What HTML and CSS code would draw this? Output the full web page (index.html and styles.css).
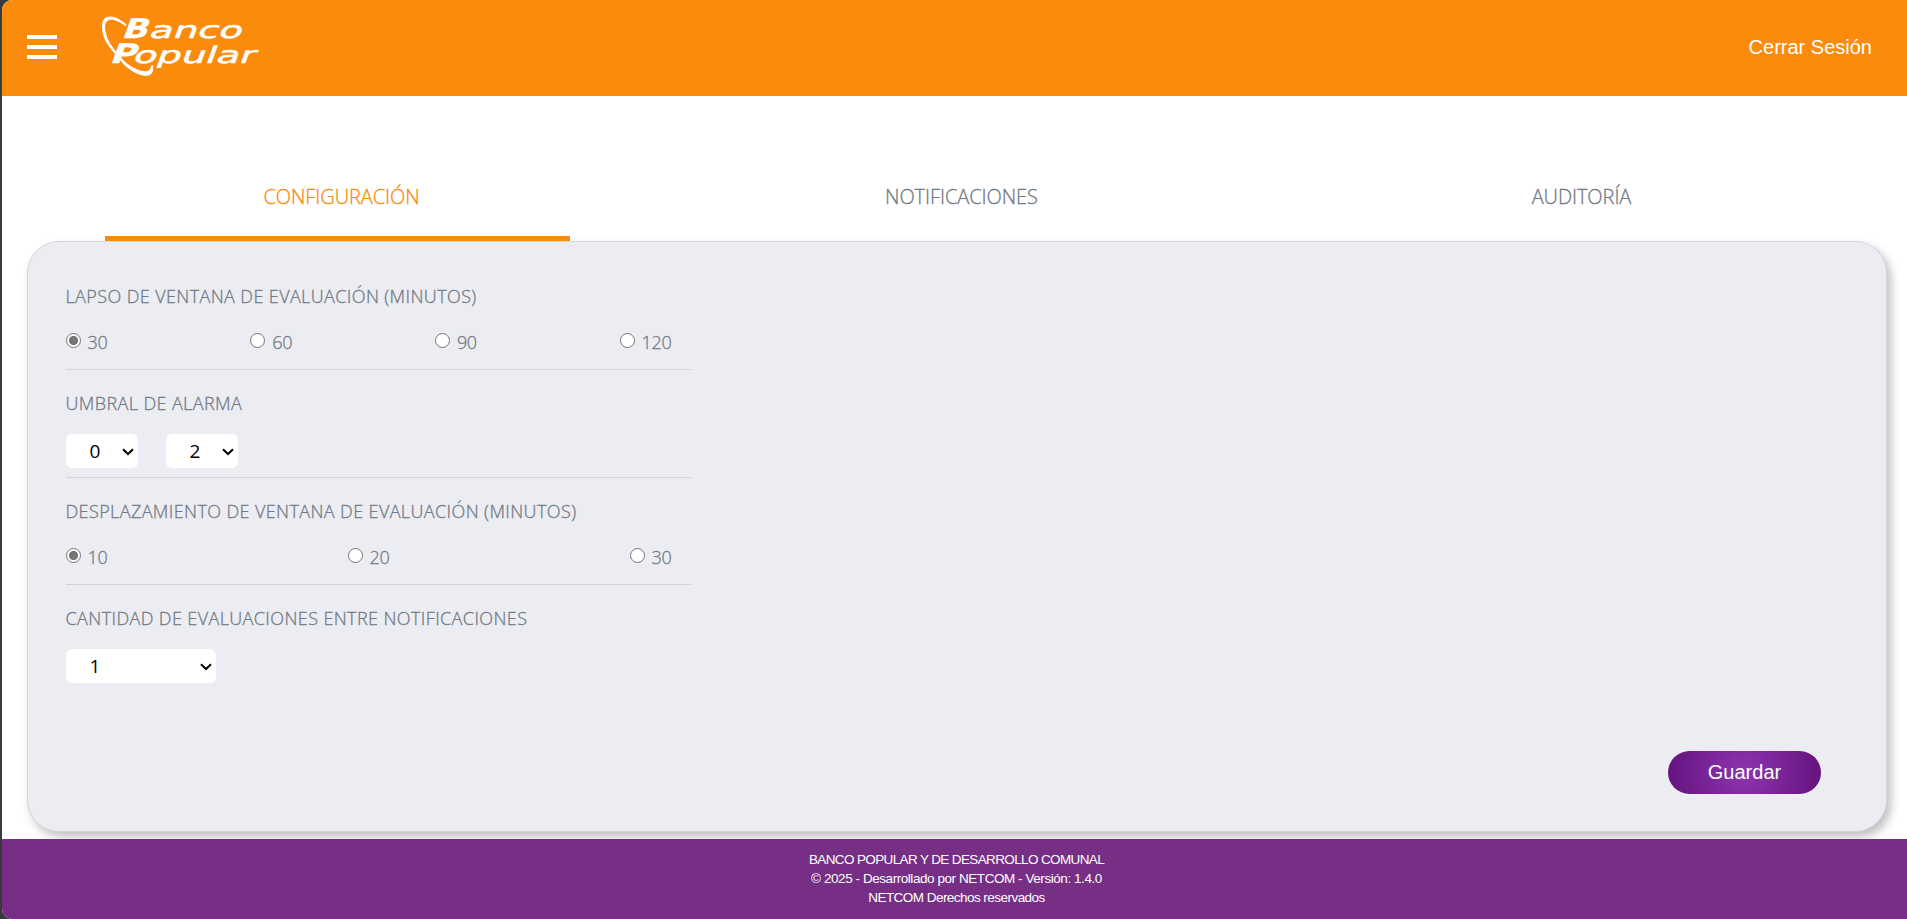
FILE: index.html
```
<!DOCTYPE html>
<html lang="es">
<head>
<meta charset="utf-8">
<title>Banco Popular</title>
<link rel="stylesheet" href="styles.css">
</head>
<body>
<div class="page">
  <header class="header">
    <button class="menu" aria-label="Menú"><span></span><span></span><span></span></button>
    <svg class="logo" viewBox="0 0 160 64" width="160" height="64" role="img" aria-label="Banco Popular">
      <path d="M0 11 C0 -4 14 -1 25 9 L23 10 C14 3 3 0 3 12 C4 23 10 31 17 39 C24 48 33 54 41 55 C46 56 49 54 49 50 L51 49 C52 56 50 60 43 60 C34 59 22 51 15 40 C6 31 0 21 0 11Z" class="ring"/>
      <g transform="skewX(-20)">
        <text x="27" y="22" class="cap" textLength="26" lengthAdjust="spacingAndGlyphs">B</text>
        <text x="54" y="22" class="word" textLength="93" lengthAdjust="spacingAndGlyphs">anco</text>
        <text x="24" y="47" class="cap" textLength="26" lengthAdjust="spacingAndGlyphs">P</text>
        <text x="47" y="47" class="word" textLength="122" lengthAdjust="spacingAndGlyphs">opular</text>
      </g>
    </svg>
    <a class="logout">Cerrar Sesión</a>
  </header>
  <main class="main">
    <nav class="tabs">
      <a class="tab active">CONFIGURACIÓN</a>
      <a class="tab">NOTIFICACIONES</a>
      <a class="tab">AUDITORÍA</a>
    </nav>
    <section class="card">
      <form class="form">
        <div class="row">
          <h2>LAPSO DE VENTANA DE EVALUACIÓN (MINUTOS)</h2>
          <div class="radios">
            <label><input type="radio" name="lapso" checked>30</label>
            <label><input type="radio" name="lapso">60</label>
            <label><input type="radio" name="lapso">90</label>
            <label><input type="radio" name="lapso">120</label>
          </div>
        </div>
        <div class="row">
          <h2>UMBRAL DE ALARMA</h2>
          <div class="selects">
            <div class="select"><select><option>0</option></select><svg viewBox="0 0 12 8"><path d="M1 1.2 L6 6 L11 1.2"/></svg></div>
            <div class="select"><select><option>2</option></select><svg viewBox="0 0 12 8"><path d="M1 1.2 L6 6 L11 1.2"/></svg></div>
          </div>
        </div>
        <div class="row">
          <h2>DESPLAZAMIENTO DE VENTANA DE EVALUACIÓN (MINUTOS)</h2>
          <div class="radios">
            <label><input type="radio" name="desp" checked>10</label>
            <label><input type="radio" name="desp">20</label>
            <label><input type="radio" name="desp">30</label>
          </div>
        </div>
        <div class="row">
          <h2>CANTIDAD DE EVALUACIONES ENTRE NOTIFICACIONES</h2>
          <div class="selects">
            <div class="select wide"><select><option>1</option></select><svg viewBox="0 0 12 8"><path d="M1 1.2 L6 6 L11 1.2"/></svg></div>
          </div>
        </div>
      </form>
      <button class="save">Guardar</button>
    </section>
  </main>
  <footer class="footer">
    <div class="org">BANCO POPULAR Y DE DESARROLLO COMUNAL</div>
    <div class="version">© 2025 - Desarrollado por NETCOM - Versión: 1.4.0</div>
    <div class="rights">NETCOM Derechos reservados</div>
  </footer>
</div>
</body>
</html>
```
FILE: styles.css
```
* { box-sizing: border-box; }
body {
  margin: 0;
  padding-left: 2px;
  height: 919px;
  overflow: hidden;
  background: #3a393b;
  font-family: "Open Sans", "Noto Sans", sans-serif;
}
.page {
  height: 919px;
  display: flex;
  flex-direction: column;
  background: #fff;
  border-radius: 10px 0 0 10px;
  overflow: hidden;
}
.header {
  height: 96px;
  flex: none;
  display: flex;
  align-items: center;
  padding: 0 35px 0 25px;
  background: #fa8b0d;
}
.menu {
  width: 30px;
  height: 24px;
  margin-top: -2px;
  padding: 0;
  border: 0;
  background: none;
  display: flex;
  flex-direction: column;
  justify-content: space-between;
}
.menu span { display: block; width: 30px; height: 4px; background: #fff; }
.logo { margin-left: 45px; overflow: visible; }
.ring { fill: #fff; }
.cap, .word { fill: #fff; stroke: #fff; font-family: "DejaVu Sans", sans-serif; }
.cap { font-size: 27px; font-weight: 700; stroke-width: .3px; }
.word { font-size: 23px; stroke-width: .5px; }
.logout {
  margin-left: auto;
  margin-top: -2px;
  color: #fff;
  font: 20px "Liberation Sans", Arial, sans-serif;
}
.main { flex: 1; padding: 64px 20px 0 25px; }
.tabs { display: grid; grid-template-columns: repeat(3, 1fr); height: 81px; }
.tab {
  width: 75%;
  justify-self: center;
  padding: 23px 0 0 9px;
  border-bottom: 5px solid transparent;
  text-align: center;
  font-size: 20px;
  font-weight: 300;
  -webkit-text-stroke: .3px currentColor;
  line-height: 28px;
  letter-spacing: -.07px;
  color: #727a84;
  white-space: nowrap;
}
.tab.active { color: #fa8b0d; border-color: #fa8b0d; }
.card {
  height: 591px;
  padding: 41px 65px 37px 37.5px;
  display: flex;
  flex-direction: column;
  background: #ecedf3;
  border: 1px solid #d6d7da;
  border-radius: 32px;
  box-shadow: 4px 5px 10px rgba(0, 0, 0, .25);
}
.form { width: 625px; }
.row { height: 107.7px; border-bottom: 1px solid #d4d5da; }
.row:first-child { height: 87px; }
.row + .row { padding-top: 20px; }
.row:last-child { border: 0; }
.row h2 {
  margin: 0;
  font-size: 18px;
  font-weight: 300;
  -webkit-text-stroke: .3px currentColor;
  line-height: 26px;
  letter-spacing: .39px;
  color: #727a84;
  white-space: nowrap;
}
.radios {
  display: flex;
  justify-content: space-between;
  padding: 20px 19px 0 0;
  color: #727a84;
  font-size: 18px;
  font-weight: 300;
  -webkit-text-stroke: .3px currentColor;
  line-height: 26px;
  letter-spacing: -.3px;
}
.radios label { display: flex; align-items: flex-start; }
.radios input {
  appearance: none;
  width: 15px;
  height: 15px;
  margin: 4px 7px 0 0;
  border: 1px solid #767676;
  border-radius: 50%;
  background: #fff;
}
.radios input:checked { background: radial-gradient(circle, #767676 4.2px, #fff 4.9px); }
.selects { display: flex; gap: 28px; padding-top: 18px; }
.select { position: relative; width: 72px; height: 34px; }
.select.wide { width: 150px; }
.select select {
  appearance: none;
  width: 100%;
  height: 100%;
  padding: 0 0 0 24px;
  border: 0;
  border-radius: 6px;
  background: #fff;
  color: #000;
  font: 19px "Open Sans", "Noto Sans", sans-serif;
}
.select svg {
  position: absolute;
  right: 4px;
  top: 14px;
  width: 12px;
  height: 8px;
  fill: none;
  stroke: #000;
  stroke-width: 2;
  pointer-events: none;
}
.save {
  width: 153px;
  height: 43px;
  margin: auto 0 0 auto;
  border: 0;
  border-radius: 22px;
  background: radial-gradient(circle, #8d35b0, #64127d);
  color: #fff;
  font: 20px "Liberation Sans", Arial, sans-serif;
}
.footer {
  height: 80px;
  flex: none;
  padding: 11px 0 0 4px;
  background: #762f85;
  color: #fff;
  text-align: center;
  font: 13.5px/19px "Liberation Sans", Arial, sans-serif;
}
.org { letter-spacing: -.63px; }
.version { letter-spacing: -.44px; }
.rights { letter-spacing: -.54px; }
```
